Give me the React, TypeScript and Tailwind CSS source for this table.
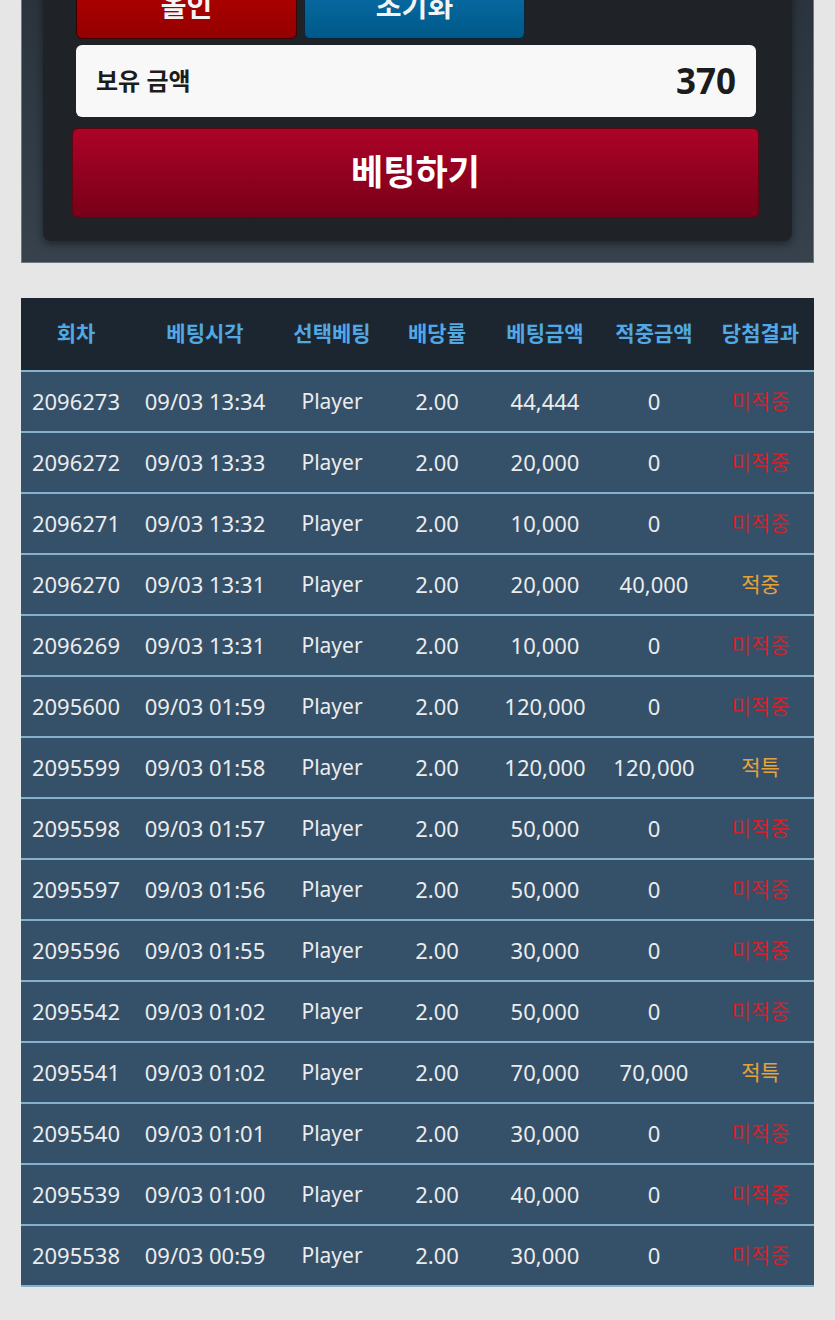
import React from "react"

type Row = {
  id: string
  time: string
  pick: string
  odds: string
  bet: string
  win: string
  result: string
}

const rows: Row[] = [
  { id: "2096273", time: "09/03 13:34", pick: "Player", odds: "2.00", bet: "44,444", win: "0", result: "미적중" },
  { id: "2096272", time: "09/03 13:33", pick: "Player", odds: "2.00", bet: "20,000", win: "0", result: "미적중" },
  { id: "2096271", time: "09/03 13:32", pick: "Player", odds: "2.00", bet: "10,000", win: "0", result: "미적중" },
  { id: "2096270", time: "09/03 13:31", pick: "Player", odds: "2.00", bet: "20,000", win: "40,000", result: "적중" },
  { id: "2096269", time: "09/03 13:31", pick: "Player", odds: "2.00", bet: "10,000", win: "0", result: "미적중" },
  { id: "2095600", time: "09/03 01:59", pick: "Player", odds: "2.00", bet: "120,000", win: "0", result: "미적중" },
  { id: "2095599", time: "09/03 01:58", pick: "Player", odds: "2.00", bet: "120,000", win: "120,000", result: "적특" },
  { id: "2095598", time: "09/03 01:57", pick: "Player", odds: "2.00", bet: "50,000", win: "0", result: "미적중" },
  { id: "2095597", time: "09/03 01:56", pick: "Player", odds: "2.00", bet: "50,000", win: "0", result: "미적중" },
  { id: "2095596", time: "09/03 01:55", pick: "Player", odds: "2.00", bet: "30,000", win: "0", result: "미적중" },
  { id: "2095542", time: "09/03 01:02", pick: "Player", odds: "2.00", bet: "50,000", win: "0", result: "미적중" },
  { id: "2095541", time: "09/03 01:02", pick: "Player", odds: "2.00", bet: "70,000", win: "70,000", result: "적특" },
  { id: "2095540", time: "09/03 01:01", pick: "Player", odds: "2.00", bet: "30,000", win: "0", result: "미적중" },
  { id: "2095539", time: "09/03 01:00", pick: "Player", odds: "2.00", bet: "40,000", win: "0", result: "미적중" },
  { id: "2095538", time: "09/03 00:59", pick: "Player", odds: "2.00", bet: "30,000", win: "0", result: "미적중" },
]

const headers = ["회차", "베팅시각", "선택베팅", "배당률", "베팅금액", "적중금액", "당첨결과"]

const cols = "grid grid-cols-[110px_148px_106px_104px_112px_106px_107px]"

export default function App() {
  return (
    <div
      className="min-h-[1320px] overflow-hidden bg-[#e6e6e6]"
      style={{ fontFamily: '"Noto Sans", "Noto Sans CJK KR", sans-serif' }}
    >
      {/* Betting panel (top cut off) */}
      <div className="ml-[21px] -mt-[40px] w-[793px] border border-[#6d7882] bg-gradient-to-b from-[#29323b] to-[#37424d] px-[21px] pb-[21px]">
        <div className="rounded-lg bg-[#1f2327] pt-[18px] pb-[23px] pl-[33px] pr-[36px] shadow-[0_3px_8px_rgba(0,0,0,0.45)]">
          <div className="flex gap-[7px]">
            <button className="flex h-[60px] w-[221px] items-center justify-center rounded-md border border-[#3a0000] bg-gradient-to-b from-[#b40000] to-[#940000] pb-[6px] text-[28px] font-bold text-[#f4f4f4]">
              올인
            </button>
            <button className="flex h-[60px] w-[221px] items-center justify-center rounded-md border border-[#0b2437] bg-gradient-to-b from-[#0b70ab] to-[#005888] pb-[6px] text-[28px] font-bold text-[#f4f4f4]">
              초기화
            </button>
          </div>

          <div className="mt-[6px] flex h-[72px] items-center justify-between rounded-md bg-[#f8f8f8] pl-[20px] pr-[20px]">
            <span className="text-[24px] font-bold text-[#1c1c1c]">보유 금액</span>
            <span className="text-[35px] font-bold text-[#1c1c1c]">370</span>
          </div>

          <button className="-ml-[4px] mt-[11px] flex h-[90px] w-[687px] items-center justify-center rounded-md border border-[#5a0613] bg-gradient-to-b from-[#ad0328] to-[#780018] pb-[2px] text-[35px] font-bold text-white">
            베팅하기
          </button>
        </div>
      </div>

      {/* History table */}
      <div className="mt-[35px] ml-[21px] w-[793px]">
        <div className={`${cols} h-[72px] items-center bg-[#1b2631] text-[21px] font-bold text-[#52a8e2]`}>
          {headers.map((h) => (
            <div key={h} className="text-center">
              {h}
            </div>
          ))}
        </div>
        {rows.map((r) => (
          <div
            key={r.id}
            className={`${cols} h-[61px] items-center border-t-2 border-[#86b1cd] bg-[#35516a] text-[22px] text-[#ececec]`}
          >
            <div className="text-center">{r.id}</div>
            <div className="text-center">{r.time}</div>
            <div className="text-center text-[21px]">{r.pick}</div>
            <div className="text-center">{r.odds}</div>
            <div className="text-center">{r.bet}</div>
            <div className="text-center">{r.win}</div>
            <div
              className={
                r.result === "미적중"
                  ? "text-center text-[21px] text-[#cf232c]"
                  : "text-center text-[21px] text-[#e7a23a]"
              }
            >
              {r.result}
            </div>
          </div>
        ))}
        <div className="h-[2px] bg-[#86b1cd]" />
      </div>
    </div>
  )
}
